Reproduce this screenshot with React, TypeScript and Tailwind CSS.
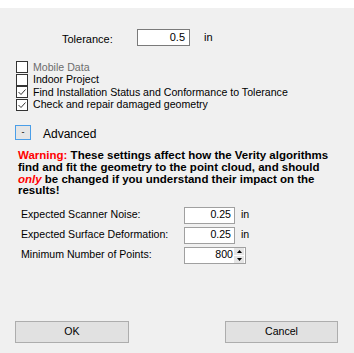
import React from "react";

function Check({ checked, label, disabled }: { checked?: boolean; label: string; disabled?: boolean }) {
  return (
    <div className="flex items-center h-[12.5px]">
      <div className="w-[12px] h-[12px] border border-[#333] bg-white flex items-center justify-center shrink-0">
        {checked && (
          <svg width="10" height="10" viewBox="0 0 10 10">
            <path d="M1.5 5 L4 7.5 L8.5 2.5" fill="none" stroke="#333" strokeWidth="1" />
          </svg>
        )}
      </div>
      <span className={"ml-[5px] leading-none " + (disabled ? "text-[#6d6d6d]" : "text-black")}>{label}</span>
    </div>
  );
}

function Field({ label, value, unit }: { label: string; value: string; unit?: string }) {
  return (
    <div className="flex items-center h-[20px] pl-[21px]">
      <span className="w-[163px]">{label}</span>
      <div className="w-[51px] h-[17px] bg-white border border-[#a0a0a0] flex items-center justify-end pr-[3px]">{value}</div>
      {unit && <span className="ml-[6px]">{unit}</span>}
    </div>
  );
}

export default function App() {
  return (
    <div className="w-[354px] h-[353px] bg-[#f0f0f0] text-[10.6px] text-black flex flex-col" style={{ fontFamily: '"Liberation Sans", Arial, sans-serif' }}>
      <div className="h-[8px] bg-white shrink-0" />

      {/* tolerance */}
      <div className="flex items-center mt-[21px] pl-[62px] h-[17px] text-[11px]">
        <span className="w-[75px] mt-[4px]">Tolerance:</span>
        <div className="w-[53px] h-[17px] bg-white border border-[#7a7a7a] flex items-center justify-end pr-[4px]">0.5</div>
        <span className="ml-[14px]">in</span>
      </div>

      <div className="flex flex-col pl-[16px] mt-[15px]">
        <Check label="Mobile Data" disabled />
        <Check label="Indoor Project" />
        <Check checked label="Find Installation Status and Conformance to Tolerance" />
        <Check checked label="Check and repair damaged geometry" />
      </div>

      <div className="flex items-center pl-[15px] mt-[10px]">
        <div className="w-[16px] h-[15px] border border-[#4a9ee8] bg-[#e5e5e5] flex items-center justify-center text-[9px] leading-none">-</div>
        <span className="ml-[12px] mt-[4px] text-[12px]">Advanced</span>
      </div>

      <p className="pl-[18px] pr-[20px] mt-[7px] font-bold text-[11.5px] leading-[11.8px]">
        <span className="text-[#ff0000]">Warning:</span> These settings affect how the Verity algorithms find and fit the geometry to the point cloud, and should{" "}
        <span className="text-[#ff0000] italic">only</span> be changed if you understand their impact on the results!
      </p>

      <div className="flex flex-col mt-[8px]">
        <Field label="Expected Scanner Noise:" value="0.25" unit="in" />
        <Field label="Expected Surface Deformation:" value="0.25" unit="in" />
        <div className="flex items-center h-[20px] pl-[21px]">
          <span className="w-[163px]">Minimum Number of Points:</span>
          <div className="w-[62px] h-[17px] bg-white border border-[#a0a0a0] flex items-center justify-end">
            <span className="pr-[1px]">800</span>
            <div className="flex flex-col w-[11px] h-full justify-center gap-[1px] pr-[1px]">
              <div className="h-[7px] bg-[#e5e5e5] flex items-center justify-center">
                <svg width="5" height="3" viewBox="0 0 5 3"><path d="M0 3 L2.5 0 L5 3 Z" fill="#000" /></svg>
              </div>
              <div className="h-[7px] bg-[#e5e5e5] flex items-center justify-center">
                <svg width="5" height="3" viewBox="0 0 5 3"><path d="M0 0 L2.5 3 L5 0 Z" fill="#000" /></svg>
              </div>
            </div>
          </div>
        </div>
      </div>

      <div className="flex justify-between pl-[15px] pr-[16px] mt-auto mb-[10px]">
        <button className="w-[114px] h-[22px] bg-[#e1e1e1] border border-[#adadad]">OK</button>
        <button className="w-[113px] h-[22px] bg-[#e1e1e1] border border-[#adadad]">Cancel</button>
      </div>
    </div>
  );
}
